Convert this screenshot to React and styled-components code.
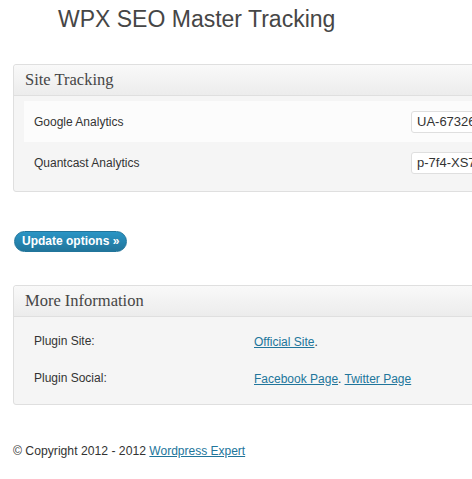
import React from "react";
import styled, { createGlobalStyle } from "styled-components";

const Global = createGlobalStyle`
html, body {
    margin: 0;
    padding: 0;
    overflow: hidden;
    background: #fff;
}
body {
    font-family: "Liberation Sans", Arial, sans-serif;
    color: #333;
}
`;

const Page = styled.div`
width: 700px;
padding: 0 0 0 13px;
box-sizing: border-box;
`;

const Title = styled.h2`
margin: 0;
padding: 5px 0 0 45px;
height: 64px;
box-sizing: border-box;
font-size: 23px;
line-height: 29px;
font-weight: normal;
color: #464646;
`;

const Panel = styled.div`
border: 1px solid #dfdfdf;
border-radius: 3px;
background: #f5f5f5;
box-shadow: inset 0 1px 0 #fff;
`;

const PanelHead = styled.h3`
margin: 0;
height: 30px;
padding: 0 11px;
display: flex;
align-items: center;
font-family: "Liberation Serif", Georgia, serif;
font-size: 16.5px;
font-weight: normal;
color: #464646;
background: linear-gradient(to bottom, #f9f9f9, #ececec);
border-bottom: 1px solid #dfdfdf;
border-radius: 3px 3px 0 0;
`;

const PanelBody = styled.div`
padding: 5px 0 ${p => p.$bottom}px 10px;
`;

const Row = styled.div`
display: grid;
grid-template-columns: ${p => p.$labelWidth}px 1fr;
align-items: center;
height: ${p => p.$height}px;
background: ${p => (p.$alt ? "#fcfcfc" : "transparent")};
`;

const Label = styled.div`
padding-left: 10px;
font-size: 12px;
color: #333;
`;

const Input = styled.input`
width: 220px;
height: 22px;
box-sizing: border-box;
border: 1px solid #dfdfdf;
border-radius: 3px;
background: #fff;
padding: 0 5px;
font-family: "Liberation Sans", Arial, sans-serif;
font-size: 13px;
color: #333;
outline: none;
`;

const Link = styled.a`
color: #21759b;
text-decoration: underline;
font-size: 12px;
`;

const Plain = styled.span`
font-size: 12px;
color: #333;
`;

const Submit = styled.div`
padding: 39px 0 33px 1px;
`;

const Button = styled.button`
height: 21px;
padding: 0 7px;
border: 1px solid #21759b;
border-radius: 11px;
background: linear-gradient(to bottom, #2a95c5, #21759b);
color: #fff;
font-family: "Liberation Sans", Arial, sans-serif;
font-size: 12px;
font-weight: bold;
line-height: 19px;
cursor: pointer;
`;

const Footer = styled.p`
margin: 0;
padding-top: 39px;
font-size: 12.2px;
line-height: 15px;
color: #333;
`;

export default function App() {
    return <Page>
        <Global />
        <Title>WPX SEO Master Tracking</Title>
        <Panel>
            <PanelHead>Site Tracking</PanelHead>
            <PanelBody $bottom={8}>
                <Row $labelWidth={387} $height={41} $alt>
                    <Label>Google Analytics</Label>
                    <div><Input defaultValue="UA-6732615-1" /></div>
                </Row>
                <Row $labelWidth={387} $height={41}>
                    <Label>Quantcast Analytics</Label>
                    <div><Input defaultValue="p-7f4-XS7JpVr8Kg" /></div>
                </Row>
            </PanelBody>
        </Panel>
        <Submit>
            <Button>Update options »</Button>
        </Submit>
        <Panel>
            <PanelHead>More Information</PanelHead>
            <PanelBody $bottom={8}>
                <Row $labelWidth={230} $height={37}>
                    <Label>Plugin Site:</Label>
                    <div><Link href="#">Official Site</Link><Plain>.</Plain></div>
                </Row>
                <Row $labelWidth={230} $height={37}>
                    <Label>Plugin Social:</Label>
                    <div>
                        <Link href="#">Facebook Page</Link><Plain>. </Plain>
                        <Link href="#">Twitter Page</Link>
                    </div>
                </Row>
            </PanelBody>
        </Panel>
        <Footer>© Copyright 2012 - 2012 <Link href="#">Wordpress Expert</Link></Footer>
    </Page>;
}
